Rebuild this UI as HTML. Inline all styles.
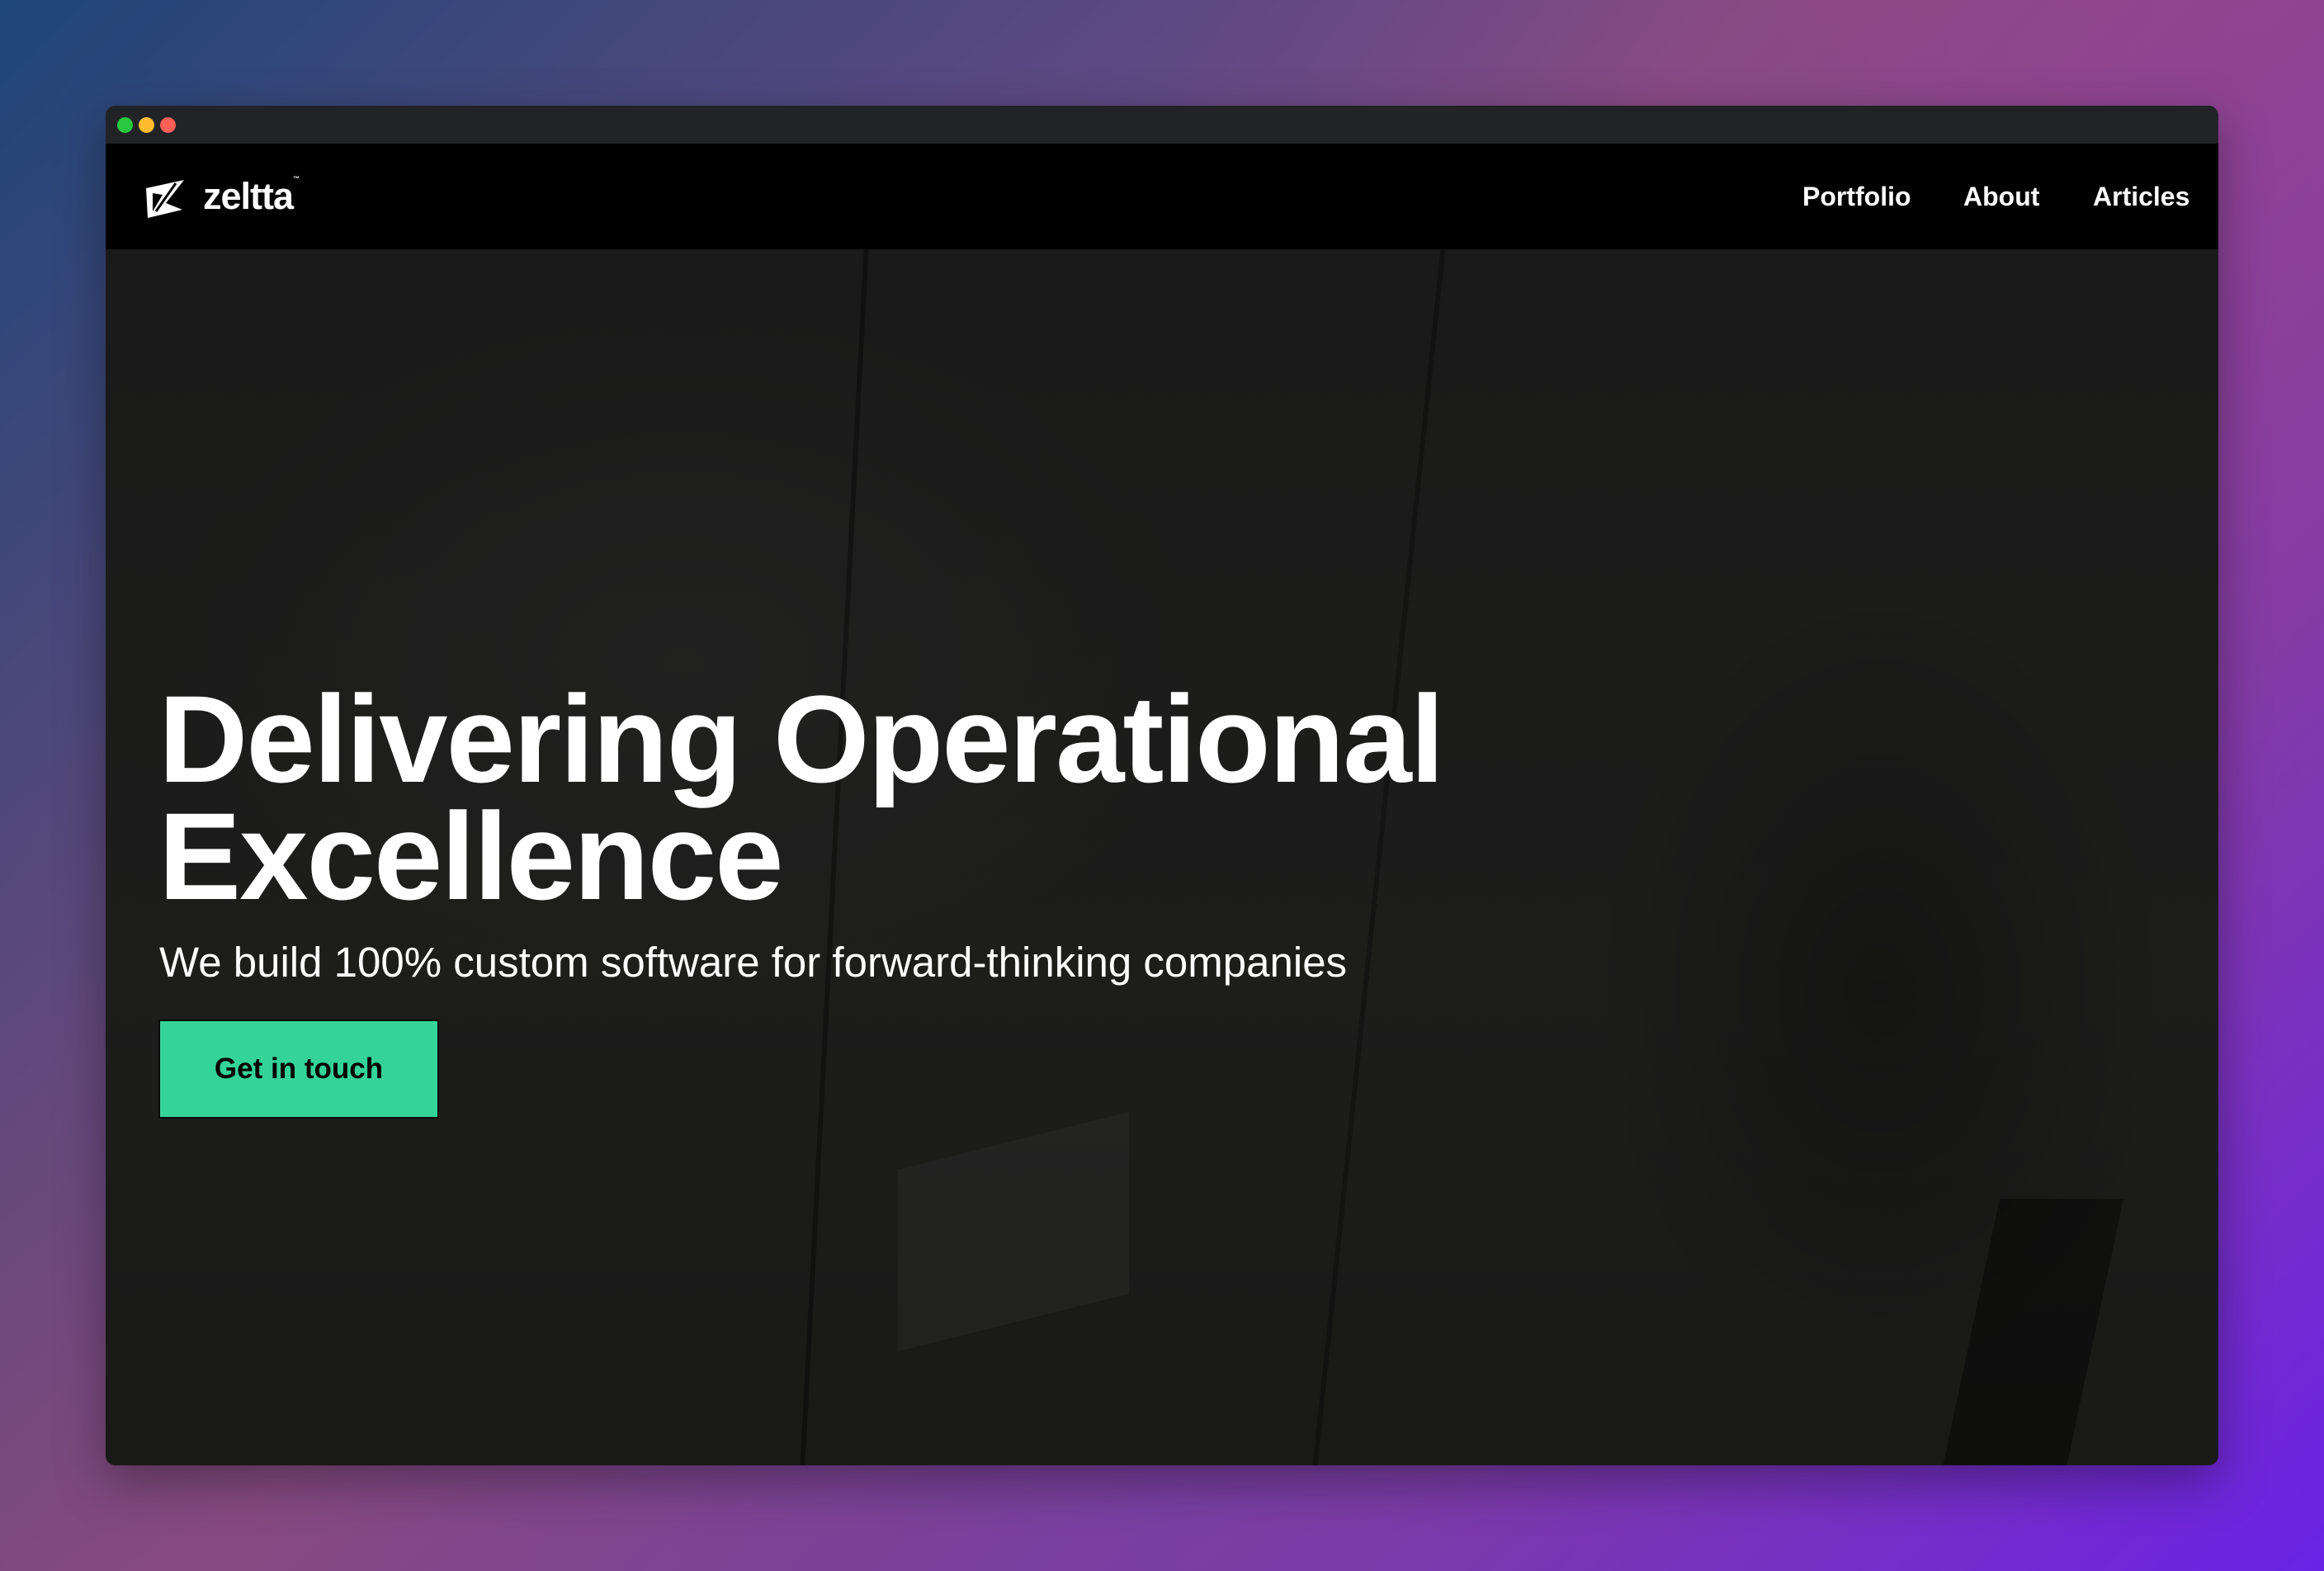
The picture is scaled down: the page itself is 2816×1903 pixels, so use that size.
<!DOCTYPE html>
<html><head><meta charset="utf-8"><style>
html,body{margin:0;padding:0;}
body{width:2816px;height:1903px;position:relative;overflow:hidden;font-family:"Liberation Sans",sans-serif;
background:
linear-gradient(135deg,rgba(30,70,120,1) 0%,rgba(120,70,130,0) 45%),
linear-gradient(315deg,#6a22e6 0%,rgba(120,50,190,0.6) 25%,rgba(140,70,140,0) 55%),
linear-gradient(90deg,#8a4a7e 0%,#7a4a88 50%,#9a4a80 100%);}
.win{position:absolute;left:128px;top:128px;width:2560px;height:1647px;border-radius:12px;overflow:hidden;background:#1b1b1b;box-shadow:0 20px 60px rgba(0,0,0,0.35);}
.tb{position:absolute;left:0;top:0;right:0;height:46px;background:#222327;}
.dot{position:absolute;top:14px;width:19px;height:19px;border-radius:50%;}
.nav{position:absolute;left:0;top:46px;right:0;height:128px;background:#000;}
.hero{position:absolute;left:0;top:174px;right:0;bottom:0;
background:
radial-gradient(ellipse 500px 700px at 2150px 900px,rgba(0,0,0,0.3),rgba(0,0,0,0) 70%),
radial-gradient(ellipse 900px 600px at 700px 500px,rgba(40,40,40,0.4),rgba(0,0,0,0) 70%),
linear-gradient(180deg,#1a1a1a,#1d1d1c 60%,#191918);}
.line{position:absolute;background:rgba(0,0,0,0.35);width:6px;}
h1{position:absolute;left:64px;top:522px;margin:0;color:#fff;font-size:150px;font-weight:700;line-height:142px;letter-spacing:-2px;}
.sub{position:absolute;left:65px;top:834px;color:#fff;font-size:51px;margin:0;white-space:nowrap;}
.btn{position:absolute;left:64px;top:933px;width:336px;height:116px;background:#34d399;border:2px solid #0a0a0a;color:#000;font-size:35px;font-weight:700;display:flex;align-items:center;justify-content:center;}
.links{position:absolute;top:0;height:128px;display:flex;align-items:center;color:#fff;font-size:32px;font-weight:700;}
</style></head><body>
<div class="win">
 <div class="tb">
  <div class="dot" style="left:14px;background:#28c840"></div>
  <div class="dot" style="left:40px;background:#febc2e"></div>
  <div class="dot" style="left:66px;background:#ff5f57"></div>
 </div>
 <div class="hero">
  <div class="line" style="left:880px;top:0;height:1473px;transform:skewX(-3deg);"></div>
  <div class="line" style="left:1540px;top:0;height:1473px;transform:skewX(-6deg);opacity:.8"></div>
  <div style="position:absolute;left:960px;top:1080px;width:280px;height:220px;background:rgba(255,255,255,0.03);transform:skewY(-14deg)"></div>
  <div style="position:absolute;left:2260px;top:1150px;width:150px;height:330px;background:rgba(0,0,0,0.4);transform:skewX(-12deg)"></div>
  <h1>Delivering Operational<br>Excellence</h1>
  <p class="sub">We build 100% custom software for forward-thinking companies</p>
  <div class="btn">Get in touch</div>
 </div>
 <div class="nav">
  <svg style="position:absolute;left:47px;top:42px" width="50" height="50" viewBox="0 0 50 50">
   <path d="M2 12 L48 2 L26 30 L46 38 L4 48 Z M10 18 L10 40 L22 20 Z" fill="#fff" fill-rule="evenodd"/>
   <path d="M14 40 L38 6" stroke="#000" stroke-width="3"/>
  </svg>
  <div style="position:absolute;left:118px;top:38px;color:#fff;font-size:45px;font-weight:700;letter-spacing:-1px">zeltta<span style="font-size:8px;vertical-align:top">™</span></div>
  <div class="links" style="left:2056px">Portfolio</div>
  <div class="links" style="left:2251px">About</div>
  <div class="links" style="left:2408px">Articles</div>
 </div>
</div>
</body></html>
